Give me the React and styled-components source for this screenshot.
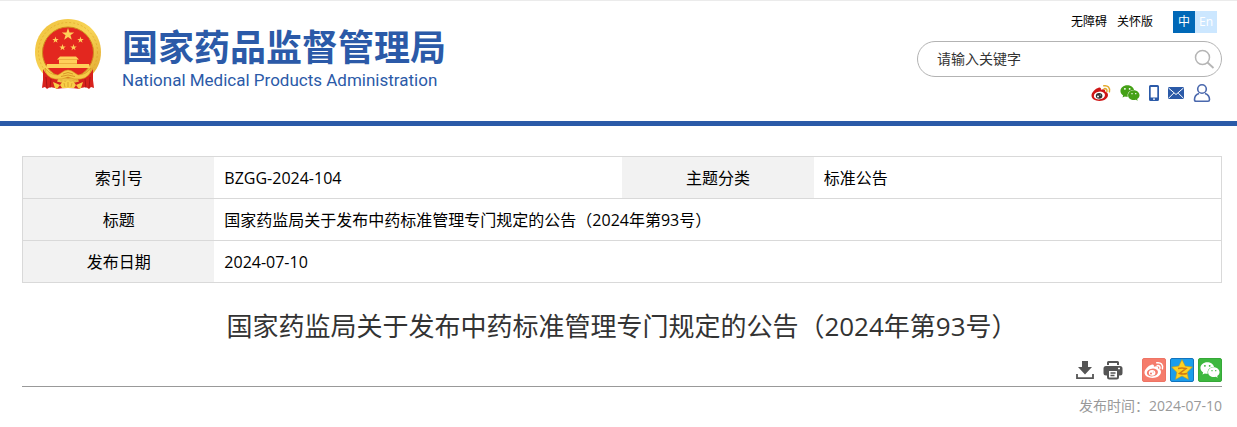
import React from "react";
import styled, { createGlobalStyle } from "styled-components";
import { FaWeixin } from "react-icons/fa";

const GlobalStyle = createGlobalStyle`
  * {
    box-sizing: border-box;
  }
  body {
    margin: 0;
    background: #fff;
    color: #000;
    font-family: "Open Sans", "Noto Sans CJK SC", sans-serif;
    font-size: 16px;
  }
  a {
    color: inherit;
    text-decoration: none;
  }
  svg {
    display: block;
  }
`;

const Header = styled.header`
  display: flex;
  justify-content: space-between;
  height: 126px;
  padding: 0 15px 0 34px;
  border-top: 1px solid #ebebeb;
  border-bottom: 5px solid #2b5aa8;
`;
const Logo = styled.a`
  display: flex;
  align-items: flex-start;
  gap: 20px;
  padding-top: 17px;
  color: #2b5aa8;
`;
const LogoText = styled.div`
  padding-top: 4px;
`;
const LogoName = styled.div`
  font-family: "Noto Sans CJK SC", sans-serif;
  font-size: 36px;
  font-weight: 700;
  line-height: 46px;
`;
const LogoSub = styled.div`
  font-family: Roboto, sans-serif;
  font-size: 17px;
  line-height: 24px;
`;
const Tools = styled.div`
  display: flex;
  flex-direction: column;
  width: 305px;
  padding-top: 10px;
`;
const TopLinks = styled.nav`
  display: flex;
  justify-content: flex-end;
  align-items: center;
  gap: 10px;
  padding-right: 5px;
  font-size: 12px;
  line-height: 22px;
`;
const Langs = styled.div`
  display: flex;
  margin-left: 10px;
`;
const Lang = styled.a`
  width: 22px;
  height: 22px;
  text-align: center;
  color: #fff;
  background: ${(props) => (props.$active ? "#0068b7" : "#cce7ff")};
`;
const Search = styled.form`
  display: flex;
  align-items: center;
  height: 36px;
  margin-top: 8px;
  padding: 0 6px 0 19px;
  border: 1px solid #b3b3b3;
  border-radius: 18px;
`;
const SearchInput = styled.input`
  flex: 1;
  min-width: 0;
  padding: 0;
  border: none;
  outline: none;
  background: none;
  font-family: inherit;
  font-size: 14px;
  line-height: 20px;
  &::placeholder {
    color: #333;
    opacity: 1;
  }
`;
const IconButton = styled.button`
  padding: 0;
  border: none;
  background: none;
  color: #555;
  cursor: pointer;
`;
const Social = styled.div`
  display: flex;
  justify-content: flex-end;
  align-items: center;
  gap: 9px;
  height: 20px;
  margin-top: 6px;
  padding-right: 11px;
`;
const Main = styled.main`
  padding: 30px 15px 0 22px;
`;
const InfoTable = styled.table`
  width: 100%;
  table-layout: fixed;
  border-collapse: collapse;
  border: 1px solid #d9d9d9;
`;
const Row = styled.tr`
  height: 42px;
  border-bottom: 1px solid #d9d9d9;
`;
const Label = styled.th`
  padding: 0;
  background: #f2f2f2;
  font-weight: 400;
  line-height: 24px;
`;
const Value = styled.td`
  padding: 0 10px;
  line-height: 24px;
`;
const Title = styled.h1`
  margin: 23px 0 0;
  color: #333;
  font-size: 26px;
  font-weight: 400;
  line-height: 40px;
  text-align: center;
`;
const Share = styled.div`
  display: flex;
  justify-content: flex-end;
  align-items: center;
  gap: 4px;
  margin-top: 12px;
  padding-bottom: 4px;
  border-bottom: 1px solid #999;
`;
const Actions = styled.div`
  display: flex;
  gap: 8px;
  margin-right: 15px;
`;
const ShareLink = styled.a`
  display: flex;
  align-items: center;
  justify-content: center;
  width: 24px;
  height: 24px;
  border: 1px solid ${(props) => props.$edge};
  border-radius: 2px;
  background: ${(props) => props.$bg};
  color: #fff;
`;
const Published = styled.p`
  margin: 8px 0 0;
  color: #999;
  font-size: 14px;
  line-height: 22px;
  text-align: right;
`;

const starPoints = (cx, cy, r, inner = 0.4) =>
  Array.from({ length: 10 }, (_, i) => {
    const d = i % 2 ? r * inner : r;
    const a = (Math.PI * i) / 5 - Math.PI / 2;
    return `${(cx + d * Math.cos(a)).toFixed(2)},${(cy + d * Math.sin(a)).toFixed(2)}`;
  }).join(" ");

const Emblem = () => (
  <svg width="68" height="73" viewBox="0 0 68 73" aria-hidden="true">
    <defs>
      <linearGradient id="gold" x1="0" y1="0" x2="1" y2="1">
        <stop offset="0" stopColor="#efc03c" />
        <stop offset="0.5" stopColor="#f8d556" />
        <stop offset="1" stopColor="#dda02b" />
      </linearGradient>
    </defs>
    <path
      d="M34 1C15 1 1 16 1 34c0 10 4 18 11 25l13 8c6 2 12 2 18 0l13-8c7-7 11-15 11-25C67 16 53 1 34 1z"
      fill="url(#gold)"
    />
    <circle
      cx="34"
      cy="34"
      r="29.500"
      fill="none"
      stroke="#d99b22"
      strokeDasharray="2 2"
      opacity="0.5"
    />
    <circle cx="34" cy="34.500" r="25.500" fill="#e3271f" stroke="#d08a1d" />
    <g fill="#ffd05a">
      <polygon points={starPoints(34, 16.5, 6.5)} />
      <polygon points={starPoints(21.5, 22, 3.4)} />
      <polygon points={starPoints(46.5, 22, 3.4)} />
      <polygon points={starPoints(28.5, 29.5, 3.4)} />
      <polygon points={starPoints(39.5, 29.5, 3.4)} />
      <path d="M26 38.500h16l3 3H23zM25 41h18v5H25zM13 46h42l1 4H12z" />
    </g>
    <path d="M24 41.500h20M25 45.500h18" stroke="#e2992c" strokeWidth="0.600" />
    {/* red drapes on both sides and under the knot */}
    <path
      d="M9 51c3 6 8 9 15 10l-3 9-5-1-3 2-2-2-3 1 1-8zM59 51c-3 6-8 9-15 10l3 9 5-1 3 2 2-2 3 1-1-8z"
      fill="#d8221d"
    />
    <path
      d="M12 59l1 11M17 61l-1 9M56 59l-1 11M51 61l1 9"
      stroke="#a31214"
      strokeWidth="0.800"
    />
    <path d="M20 63q14 4 28 0l-2 8q-12-2-24 0z" fill="#d4221f" />
    <path
      d="M11 50q5 7 13 7l6-4q4-2 8 0l6 4q8 0 13-7 0 9-10 11-7 1-13-2-6 3-13 2Q11 59 11 50z"
      fill="#f6cb48"
      stroke="#d4921f"
      strokeWidth="0.600"
    />
    <path
      d="M29 56q5-3 10 0M27 58.500q7-3 14 0"
      fill="none"
      stroke="#cf8a20"
      strokeWidth="0.800"
    />
    <path
      d="M26 67l3-4 2 1 3-2 3 2 2-1 3 4-2 3h-12zM19 64l7 3-3 4-2-1zM49 64l-7 3 3 4 2-1z"
      fill="#f7cf47"
    />
    <path
      d="M30 65l1 4M34 64v5M38 65l-1 4"
      stroke="#cf8a20"
      strokeWidth="0.600"
    />
  </svg>
);

const Weibo = ({ size = 20, body, eye, pupil, wave }) => (
  <svg width={size} height={size} viewBox="0 0 20 20" aria-hidden="true">
    <path
      d="M7.500 4.700c1.500-.5 2.800.1 2.400 2 2-.9 4.800-.8 4.200 1.800 1.700.5 2.900 1.500 2.900 3.400 0 3.200-3.800 6-8.500 6C4 17.900.5 15.800.5 12.500.5 9.300 4.500 5.500 7.500 4.700z"
      fill={body}
    />
    <ellipse
      cx="8.400"
      cy="12.500"
      rx="5.600"
      ry="3.900"
      fill={eye}
      transform="rotate(-8 8.400 12.500)"
    />
    <ellipse cx="8.100" cy="12.800" rx="3.300" ry="2.900" fill={pupil} />
    <circle cx="7" cy="13.600" r="1" fill={eye} />
    <circle cx="9.200" cy="12" r="0.500" fill={eye} />
    <path
      d="M12.800 2.800c4-.8 6.600 2.200 5.600 6M13.200 5.700c2-.4 3.200 1 2.700 2.900"
      fill="none"
      stroke={wave}
      strokeWidth="1.500"
      strokeLinecap="round"
    />
  </svg>
);

const SearchIcon = () => (
  <svg width="22" height="22" viewBox="0 0 22 22" fill="none" stroke="#b5b5b5">
    <circle cx="9.500" cy="9.500" r="7" strokeWidth="1.500" />
    <path d="M14.500 14.500l6 5.500" strokeWidth="1.800" />
  </svg>
);

const PhoneIcon = () => (
  <svg width="10" height="16" viewBox="0 0 10 16" aria-hidden="true">
    <path
      fillRule="evenodd"
      d="M1.500 0h7Q10 0 10 1.500v13Q10 16 8.500 16h-7Q0 16 0 14.500v-13Q0 0 1.500 0zM1.700 2v10.500h6.600V2zM4 13.500v1.300h2v-1.300z"
      fill="#2b5aa8"
    />
  </svg>
);

const MailIcon = () => (
  <svg width="16" height="12" viewBox="0 0 16 12" aria-hidden="true">
    <rect width="16" height="12" rx="1" fill="#2b5aa8" />
    <path
      d="M.5 1L8 7.500 15.500 1M.5 11.300L5.800 6M15.500 11.300L10.200 6"
      fill="none"
      stroke="#fff"
    />
  </svg>
);

const UserIcon = () => (
  <svg
    width="18"
    height="20"
    viewBox="0 0 18 20"
    fill="none"
    stroke="#4a68ad"
    strokeWidth="1.600"
    aria-hidden="true"
  >
    <circle cx="9" cy="6" r="4.300" />
    <path d="M6 10.500C3 11.500 1.500 14 1.500 16.500q0 1.800 1.500 1.800h12q1.500 0 1.500-1.800c0-2.500-1.500-5-4.500-6" />
  </svg>
);

const DownloadIcon = () => (
  <svg width="20" height="20" viewBox="0 0 20 20" aria-hidden="true">
    <path d="M7 1h6v6h4l-7 7.500L3 7h4z" fill="currentColor" />
    <path
      d="M2 14v4.200h16V14"
      fill="none"
      stroke="currentColor"
      strokeWidth="1.800"
    />
  </svg>
);

const PrintIcon = () => (
  <svg width="20" height="20" viewBox="0 0 20 20" aria-hidden="true">
    <path
      fillRule="evenodd"
      d="M4 5V2.500Q4 1 5.500 1h9Q16 1 16 2.500V5h-2V3H6v2zM3 6h14q2.500 0 2.500 2.500V13q0 2.500-2.500 2.500h-1V17q0 2.500-2.500 2.500h-7Q4 19.500 4 17v-1.500H3Q.5 15.500.5 13V8.500Q.5 6 3 6zM6 11v6.500h8V11zM15 7.700v1.600h2V7.700z"
      fill="currentColor"
    />
    <path d="M7.500 13h5M7.500 15.500h4" stroke="currentColor" strokeWidth="1.300" />
  </svg>
);

const QzoneIcon = () => (
  <svg width="22" height="22" viewBox="0 0 22 22" aria-hidden="true">
    <polygon
      points={starPoints(11, 11.5, 11, 0.5)}
      fill="#ffd21f"
      stroke="#b5952a"
      strokeWidth="0.600"
      strokeLinejoin="round"
    />
    <path
      d="M7 9.500q4-1 8 0L8.500 14.500q3.500 1 7.500 0"
      fill="none"
      stroke="#d07a14"
      strokeWidth="1.500"
    />
  </svg>
);

const App = () => {
  return (
    <>
      <GlobalStyle />
      <Header>
        <Logo href="#">
          <Emblem />
          <LogoText>
            <LogoName>国家药品监督管理局</LogoName>
            <LogoSub>National Medical Products Administration</LogoSub>
          </LogoText>
        </Logo>
        <Tools>
          <TopLinks>
            <a href="#">无障碍</a>
            <a href="#">关怀版</a>
            <Langs>
              <Lang href="#" $active>
                中
              </Lang>
              <Lang href="#">En</Lang>
            </Langs>
          </TopLinks>
          <Search>
            <SearchInput
              type="text"
              placeholder="请输入关键字"
              aria-label="请输入关键字"
            />
            <IconButton type="button" aria-label="搜索">
              <SearchIcon />
            </IconButton>
          </Search>
          <Social>
            <a href="#" aria-label="微博">
              <Weibo body="#cf1515" eye="#fff" pupil="#333" wave="#e2a92c" />
            </a>
            <a href="#" aria-label="微信">
              <FaWeixin size={20} color="#45a117" />
            </a>
            <a href="#" aria-label="手机">
              <PhoneIcon />
            </a>
            <a href="#" aria-label="邮箱">
              <MailIcon />
            </a>
            <a href="#" aria-label="用户">
              <UserIcon />
            </a>
          </Social>
        </Tools>
      </Header>
      <Main>
        <InfoTable>
          <colgroup>
            <col width="16%" />
            <col width="34%" />
            <col width="16%" />
            <col width="34%" />
          </colgroup>
          <tbody>
            <Row>
              <Label scope="row">索引号</Label>
              <Value>BZGG-2024-104</Value>
              <Label scope="row">主题分类</Label>
              <Value>标准公告</Value>
            </Row>
            <Row>
              <Label scope="row">标题</Label>
              <Value colSpan={3}>
                国家药监局关于发布中药标准管理专门规定的公告（2024年第93号）
              </Value>
            </Row>
            <Row>
              <Label scope="row">发布日期</Label>
              <Value colSpan={3}>2024-07-10</Value>
            </Row>
          </tbody>
        </InfoTable>
        <Title>
          国家药监局关于发布中药标准管理专门规定的公告（2024年第93号）
        </Title>
        <Share>
          <Actions>
            <IconButton type="button" aria-label="下载">
              <DownloadIcon />
            </IconButton>
            <IconButton type="button" aria-label="打印">
              <PrintIcon />
            </IconButton>
          </Actions>
          <ShareLink href="#" $bg="#f57c6c" $edge="#ee7465" aria-label="微博">
            <Weibo body="#fff" eye="#f57c6c" pupil="#fff" wave="#fff" />
          </ShareLink>
          <ShareLink href="#" $bg="#1b9dec" $edge="#1273bd" aria-label="QQ空间">
            <QzoneIcon />
          </ShareLink>
          <ShareLink href="#" $bg="#3db83f" $edge="#36a838" aria-label="微信">
            <FaWeixin size={20} />
          </ShareLink>
        </Share>
        <Published>发布时间：2024-07-10</Published>
      </Main>
    </>
  );
};

export default App;
